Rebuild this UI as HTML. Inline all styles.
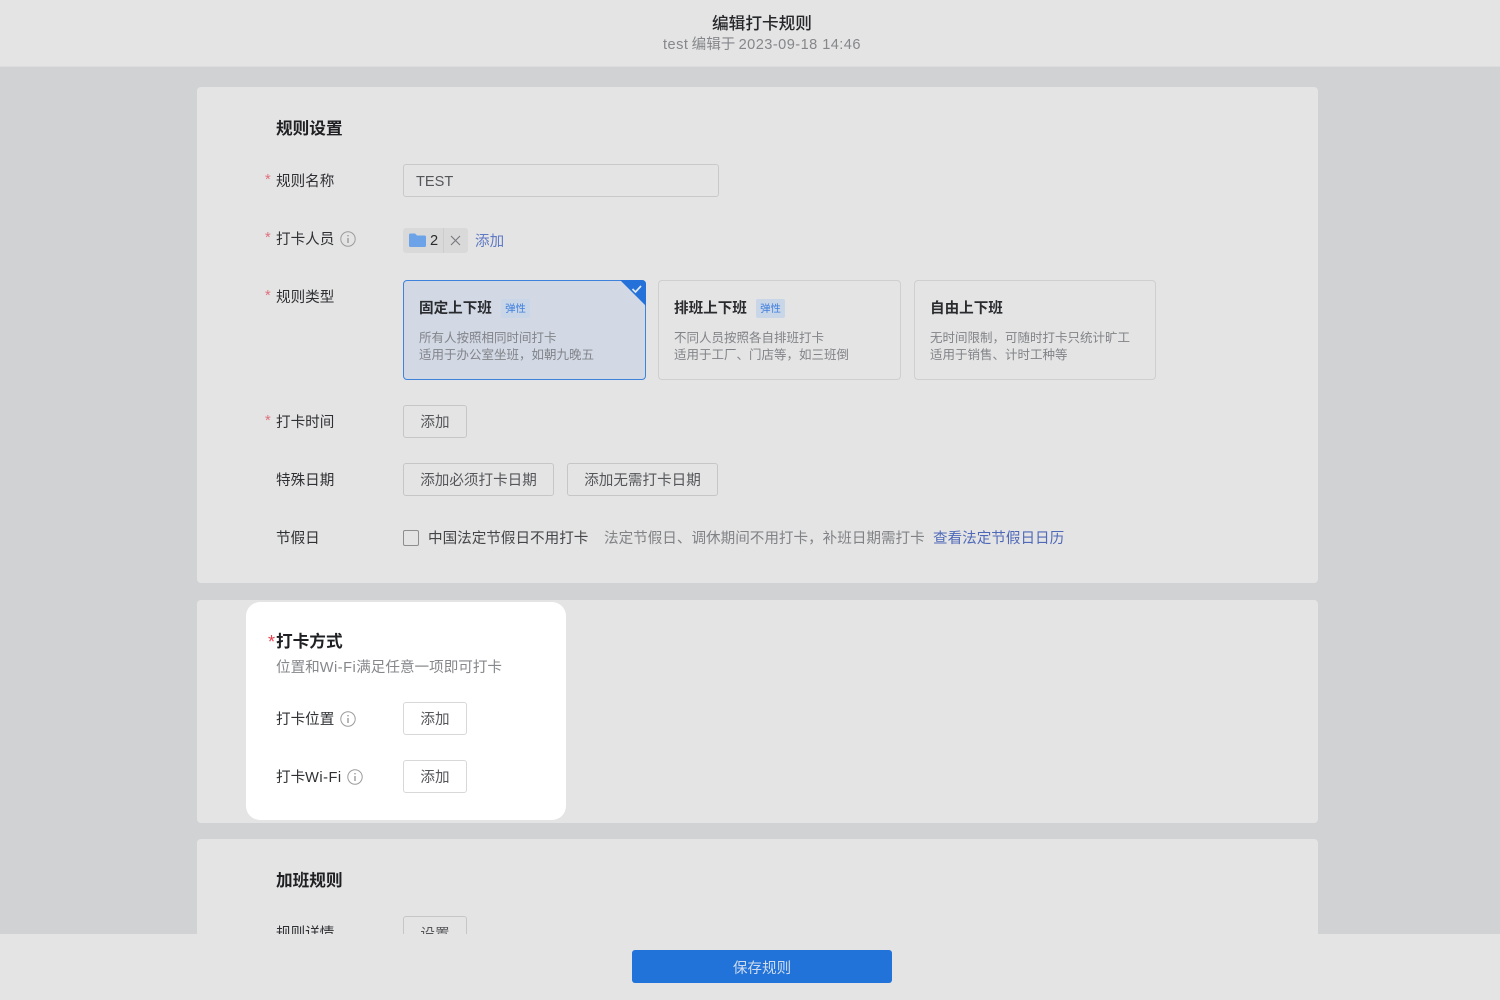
<!DOCTYPE html>
<html lang="zh-CN"><head><meta charset="utf-8"><title>编辑打卡规则</title>
<style>
*{box-sizing:border-box}
html,body{margin:0;padding:0}
body{width:1500px;height:1000px;position:relative;overflow:hidden;background:#d1d2d4;font-family:"Noto Sans CJK SC","Liberation Sans",sans-serif;color:#2a2b2e}
#r{position:absolute;left:0;top:0;width:1500px;height:1000px;filter:blur(.35px)}
.a{position:absolute;white-space:nowrap}
.la{font-family:"Liberation Sans",sans-serif;letter-spacing:.45px}
.card{position:absolute;left:197px;width:1121px;background:#e4e4e4;border-radius:4px}
.h{font-size:16.67px;font-weight:700;line-height:24px;color:#1f2023;left:276px}
.l{font-size:14.58px;line-height:20px;left:276px;color:#2f3033}
.s{font-family:"Liberation Sans",sans-serif;font-size:14.58px;line-height:20px;left:265px;color:#e0707e}
.btn{position:absolute;height:33px;border:1px solid #c6c6c6;border-radius:3px;font-size:14.58px;line-height:31px;text-align:center;color:#55565a}
.type{position:absolute;top:280px;width:243px;height:100px;border:1px solid #cfcfcf;border-radius:4px}
.tt{position:absolute;left:15px;top:17px;font-size:14.58px;line-height:20px;font-weight:700;color:#2a2b2e;white-space:nowrap}
.tag{position:absolute;left:97px;top:18px;width:29px;height:19px;background:#c9d6e8;border-radius:2px;font-size:10.4px;line-height:17px;text-align:center;color:#3f7fdc}
.td{position:absolute;left:15px;top:47px;font-size:12.5px;line-height:17px;color:#818388;white-space:nowrap}
.i{position:absolute;width:16px;height:16px}
</style></head>
<body><div id="r">
<div class="a" style="left:0;top:0;width:1500px;height:67px;background:#e4e4e4;border-bottom:1px solid #dcdcdc"></div>
<div class="a" style="left:562px;width:400px;top:11px;text-align:center;font-size:16.67px;line-height:22px;font-weight:500;color:#26272a">编辑打卡规则</div>
<div class="a" style="left:562px;width:400px;top:34px;text-align:center;font-size:14.58px;line-height:19px;color:#85878b"><span class="la">test</span> 编辑于 <span class="la">2023-09-18 14:46</span></div>

<div class="card" style="top:87px;height:496px"></div>
<div class="a h" style="top:115px">规则设置</div>

<div class="a s" style="top:170px">*</div><div class="a l" style="top:171px">规则名称</div>
<div class="a" style="left:403px;top:164px;width:316px;height:33px;border:1px solid #c9c9c9;border-radius:3px;font-size:14.58px;line-height:31px;padding-left:12px;color:#55565a"><span class="la" style="letter-spacing:0">TEST</span></div>

<div class="a s" style="top:228px">*</div><div class="a l" style="top:229px">打卡人员</div>
<svg class="i" style="left:340px;top:231px" viewBox="0 0 16 16" fill="none" stroke="#9b9b9b"><circle cx="8" cy="8" r="7.2"/><path d="M8 7v5M8 4v1.4" stroke-width="1.4"/></svg>
<div class="a" style="left:403px;top:228px;width:65px;height:25px;background:#d9d9d9;border-radius:3px"></div>
<div class="a" style="left:443px;top:228px;width:1px;height:25px;background:#cdcdcd"></div>
<svg class="a" style="left:409px;top:233px" width="17" height="14" viewBox="0 0 17 14"><path d="M0 2a1.5 1.5 0 0 1 1.5-1.5H6L8 2.500h7.500A1.500 1.500 0 0 1 17 4v8.500A1.500 1.500 0 0 1 15.500 14h-14A1.500 1.500 0 0 1 0 12.500z" fill="#6ba2e8"/></svg>
<div class="a" style="left:430px;top:230px;font-size:14.58px;line-height:20px;color:#2a2b2e"><span class="la">2</span></div>
<svg class="a" style="left:450px;top:235px" width="11" height="11" viewBox="0 0 11 11" stroke="#77787b" stroke-width="1.100"><path d="M1 1l9 9M10 1l-9 9"/></svg>
<div class="a" style="left:475px;top:231px;font-size:14.58px;line-height:20px;color:#5f79c4">添加</div>

<div class="a s" style="top:286px">*</div><div class="a l" style="top:287px">规则类型</div>
<div class="type" style="left:403px;background:#d2d9e5;border-color:#3e82dc">
<div class="tt">固定上下班</div><div class="tag">弹性</div>
<div class="td">所有人按照相同时间打卡<br>适用于办公室坐班，如朝九晚五</div>
<svg class="a" style="left:216px;top:-1px" width="26" height="26" viewBox="0 0 26 26"><path d="M0 0h22a4 4 0 0 1 4 4v22z" fill="#2472d9"/><path d="M12.500 9l3 3 5.500-6" fill="none" stroke="#dfe8f5" stroke-width="1.700"/></svg>
</div>
<div class="type" style="left:658px"><div class="tt">排班上下班</div><div class="tag">弹性</div>
<div class="td">不同人员按照各自排班打卡<br>适用于工厂、门店等，如三班倒</div></div>
<div class="type" style="left:914px;width:242px"><div class="tt">自由上下班</div>
<div class="td">无时间限制，可随时打卡只统计旷工<br>适用于销售、计时工种等</div></div>

<div class="a s" style="top:411px">*</div><div class="a l" style="top:412px">打卡时间</div>
<div class="btn" style="left:403px;top:405px;width:64px">添加</div>
<div class="a l" style="top:470px">特殊日期</div>
<div class="btn" style="left:403px;top:463px;width:151px">添加必须打卡日期</div>
<div class="btn" style="left:567px;top:463px;width:151px">添加无需打卡日期</div>
<div class="a l" style="top:528px">节假日</div>
<div class="a" style="left:403px;top:530px;width:16px;height:16px;border:1px solid #8e8e8e;border-radius:2px"></div>
<div class="a" style="left:428px;top:528px;font-size:14.58px;line-height:20px;color:#444548">中国法定节假日不用打卡</div>
<div class="a" style="left:604px;top:528px;font-size:14.58px;line-height:20px;color:#808286">法定节假日、调休期间不用打卡，补班日期需打卡</div>
<div class="a" style="left:933px;top:528px;font-size:14.58px;line-height:20px;color:#4f69b8">查看法定节假日日历</div>

<div class="card" style="top:600px;height:223px"></div>
<div class="a" style="left:246px;top:602px;width:320px;height:218px;background:#fff;border-radius:14px"></div>
<div class="a" style="left:268px;top:630px;font-family:'Liberation Sans',sans-serif;font-size:18px;line-height:24px;color:#e8414f">*</div>
<div class="a h" style="top:628px">打卡方式</div>
<div class="a" style="left:276px;top:657px;font-size:14.58px;line-height:20px;color:#85878b">位置和<span class="la" style="letter-spacing:.5px">Wi-Fi</span>满足任意一项即可打卡</div>
<div class="a l" style="top:709px">打卡位置</div>
<svg class="i" style="left:340px;top:711px" viewBox="0 0 16 16" fill="none" stroke="#9b9b9b"><circle cx="8" cy="8" r="7.200"/><path d="M8 7v5M8 4v1.400" stroke-width="1.400"/></svg>
<div class="btn" style="left:403px;top:702px;width:64px;border-color:#d8d8d8;background:#fff">添加</div>
<div class="a l" style="top:767px">打卡<span class="la" style="letter-spacing:.5px">Wi-Fi</span></div>
<svg class="i" style="left:347px;top:769px" viewBox="0 0 16 16" fill="none" stroke="#9b9b9b"><circle cx="8" cy="8" r="7.200"/><path d="M8 7v5M8 4v1.400" stroke-width="1.400"/></svg>
<div class="btn" style="left:403px;top:760px;width:64px;border-color:#d8d8d8;background:#fff">添加</div>

<div class="card" style="top:839px;height:161px"></div>
<div class="a h" style="top:867px">加班规则</div>
<div class="a l" style="top:923px">规则详情</div>
<div class="btn" style="left:403px;top:916px;width:64px;padding-top:1px">设置</div>

<div class="a" style="left:0;top:934px;width:1500px;height:66px;background:#e4e4e4"></div>
<div class="a" style="left:632px;top:950px;width:260px;height:33px;background:#2172d9;border-radius:3px;text-align:center;font-size:14.58px;line-height:35px;color:#cfdcee">保存规则</div>
</div></body></html>
